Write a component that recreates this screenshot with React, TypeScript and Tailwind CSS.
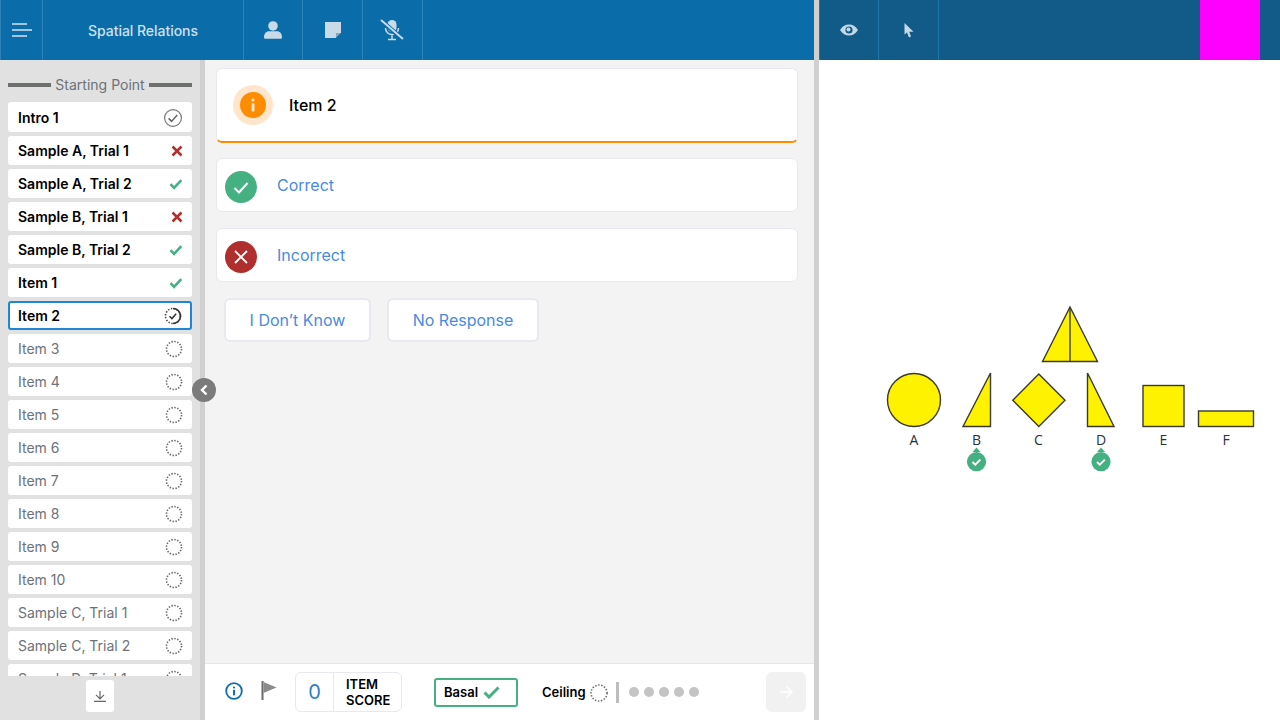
import React from "react";

const F = "[font-family:Inter,'Liberation_Sans',sans-serif]";

function Pending({ inProgress }: { inProgress?: boolean }) {
  return (
    <svg width="18" height="18" viewBox="0 0 18 18" fill="none">
      {inProgress ? (
        <>
          <circle cx="9" cy="9" r="7.5" stroke="#444" strokeWidth="1.6" strokeDasharray="1.4 1.6" />
          <path d="M9 1.5A7.5 7.5 0 0 1 9 16.5" stroke="#333" strokeWidth="1.6" />
          <path d="M5.5 9.3l2.4 2.3 4.2-4.800" stroke="#333" strokeWidth="1.5" />
        </>
      ) : (
        <circle cx="9" cy="9" r="7.5" stroke="#666" strokeWidth="1.6" strokeDasharray="1.4 1.55" />
      )}
    </svg>
  );
}

function Status({ s }: { s: string }) {
  if (s === "done")
    return (
      <svg width="20" height="20" viewBox="0 0 20 20" fill="none">
        <circle cx="10" cy="10" r="8.4" stroke="#777" strokeWidth="1.2" />
        <path d="M5.6 10.4l3 3 5.6-6.4" stroke="#666" strokeWidth="1.5" />
      </svg>
    );
  if (s === "x")
    return (
      <svg width="12" height="12" viewBox="0 0 12 12" fill="none" className="ml-[8px]">
        <path d="M1.500 1.500l9 9M10.500 1.500l-9 9" stroke="#b3302e" strokeWidth="2.600" />
      </svg>
    );
  if (s === "check")
    return (
      <svg width="14" height="12" viewBox="0 0 14 12" fill="none" className="ml-[6px]">
        <path d="M1.500 6.200l3.600 3.600 7.200-7.600" stroke="#45b082" strokeWidth="2.600" />
      </svg>
    );
  if (s === "current")
    return (
      <span className="ml-[4px] flex">
        <Pending inProgress />
      </span>
    );
  return (
    <span className="ml-[2px] flex">
      <Pending />
    </span>
  );
}

const items: [string, string][] = [
  ["Intro 1", "done"],
  ["Sample A, Trial 1", "x"],
  ["Sample A, Trial 2", "check"],
  ["Sample B, Trial 1", "x"],
  ["Sample B, Trial 2", "check"],
  ["Item 1", "check"],
  ["Item 2", "current"],
  ["Item 3", ""],
  ["Item 4", ""],
  ["Item 5", ""],
  ["Item 6", ""],
  ["Item 7", ""],
  ["Item 8", ""],
  ["Item 9", ""],
  ["Item 10", ""],
  ["Sample C, Trial 1", ""],
  ["Sample C, Trial 2", ""],
  ["Sample D, Trial 1", ""],
];

function Row({ label, s, first }: { label: string; s: string; first: boolean }) {
  const active = s !== "";
  const current = s === "current";
  return (
    <div
      className={`flex shrink-0 items-center justify-between rounded-[3px] bg-white text-[14px] ${
        first ? "h-[30px] pt-[1px]" : "h-[29px]"
      } ${current ? "border-2 border-[#1f86d6] pl-[8px]" : "pl-[10px]"} ${
        active ? "font-semibold text-black" : "text-[#6d7278]"
      }`}
    >
      <span>{label}</span>
      <span className="flex w-[38px] justify-center">
        <Status s={s} />
      </span>
    </div>
  );
}

function HeaderCell({ children, w }: { children: React.ReactNode; w: string }) {
  return <div className={`flex h-full shrink-0 items-center justify-center border-r border-[#2f82b8] ${w}`}>{children}</div>;
}

function Badge({ cx }: { cx: number }) {
  return (
    <g>
      <path d={`M${cx - 4} 452L${cx} 447.500L${cx + 4} 452Z`} fill="#45b082" />
      <circle cx={cx} cy="461.700" r="9.600" fill="#45b082" />
      <path d={`M${cx - 4} 462l2.800 2.700 5-5`} stroke="#fff" strokeWidth="1.900" fill="none" />
    </g>
  );
}

function Stimulus() {
  const st = { fill: "#fff200", stroke: "#3b3a2a", strokeWidth: 1.4 };
  const labels: [string, number][] = [
    ["A", 914],
    ["B", 976.5],
    ["C", 1038.5],
    ["D", 1101],
    ["E", 1163.5],
    ["F", 1226],
  ];
  return (
    <svg className="block h-[660px] w-[461px]" viewBox="819 60 461 660">
      <path d="M1070 307L1042.500 361.500H1097.500Z" {...st} />
      <path d="M1070 307V361.500" {...st} />
      <circle cx="914" cy="400" r="26.500" {...st} />
      <path d="M963 426.500L990.500 373V426.500Z" {...st} />
      <path d="M1038.800 374L1065 400.300L1038.800 426.500L1012.800 400.300Z" {...st} />
      <path d="M1087.500 373V426.500H1114Z" {...st} />
      <rect x="1143" y="385.500" width="41" height="41" {...st} />
      <rect x="1198.500" y="411" width="55" height="15.500" {...st} />
      {labels.map(([l, x]) => (
        <text key={l} x={x} y="445" textAnchor="middle" fontSize="14" fill="#2b3040" fontFamily="'Open Sans',sans-serif">
          {l}
        </text>
      ))}
      <Badge cx={976.5} />
      <Badge cx={1101} />
    </svg>
  );
}

export default function App() {
  return (
    <div className={`flex h-[720px] w-[1280px] overflow-hidden bg-white ${F}`}>
      <div className="flex w-[814px] shrink-0 flex-col">
        <header className="flex h-[60px] shrink-0 items-center border-l border-[#2f82b8] bg-[#0a6ca8]">
          <HeaderCell w="w-[42px]">
            <svg width="22" height="16" viewBox="0 0 22 16" fill="none" stroke="#d3e2ee" strokeWidth="1.600">
              <path d="M1 2H16M1 8H21M1 14H16" />
            </svg>
          </HeaderCell>
          <HeaderCell w="w-[201px]">
            <span className="text-[14px] font-medium tracking-[-0.03px] text-[#cfe0ec]">Spatial Relations</span>
          </HeaderCell>
          <HeaderCell w="w-[59px]">
            <svg width="18" height="18" viewBox="0 0 20 20" fill="#c9dbe8">
              <circle cx="10" cy="5.500" r="5.300" />
              <path d="M0 18c0-4 2.500-6.500 5.500-6.500h9c3 0 5.500 2.500 5.500 6.500 0 1-.8 1.800-1.800 1.800H1.800C.8 19.800 0 19 0 18z" />
            </svg>
          </HeaderCell>
          <HeaderCell w="w-[60px]">
            <svg width="16" height="16" viewBox="0 0 16 16">
              <path d="M0 0H16V10.500L10.500 16H0Z" fill="#c9dbe8" />
              <path d="M11 11H15.500L11 15.500Z" fill="#7fa9c6" />
            </svg>
          </HeaderCell>
          <HeaderCell w="w-[60px]">
            <svg width="24" height="22" viewBox="0 0 24 22" fill="none" className="mr-[2px]">
              <rect x="7.500" y="1" width="9" height="12" rx="4.500" fill="#c9dbe8" />
              <path d="M5.500 9c0 4 3 6.500 6.500 6.500S18.500 13 18.500 9M12 15.500V20M8 20.500H16" stroke="#c9dbe8" strokeWidth="1.500" />
              <path d="M1 1.500L23 20.500" stroke="#0a6ca8" strokeWidth="4.500" />
              <path d="M1 1L23 20" stroke="#c9dbe8" strokeWidth="2" />
            </svg>
          </HeaderCell>
        </header>

        <div className="flex min-h-0 flex-1">
          <aside className="relative flex w-[205px] shrink-0 flex-col border-r-[5px] border-[#d0d0d0] bg-[#e1e1e1]">
            <div className="flex h-[42px] shrink-0 items-end gap-[4px] px-2 pb-[9px]">
              <span className="mb-[6px] h-[4px] flex-1 bg-[#6e706e]" />
              <span className="text-[14px] leading-[17px] tracking-[0.01px] text-[#6d7278]">Starting Point</span>
              <span className="mb-[6px] h-[4px] flex-1 bg-[#6e706e]" />
            </div>
            <div className="flex h-[574px] shrink-0 flex-col gap-[4px] overflow-hidden px-2">
              {items.map(([l, s], i) => (
                <Row key={l} label={l} s={s} first={i === 0} />
              ))}
            </div>
            <div className="flex justify-center pt-[4px]">
              <div className="flex h-[32px] w-[28px] items-center justify-center rounded-[3px] bg-white">
                <svg width="12" height="11" viewBox="0 0 12 11" fill="none" stroke="#666" strokeWidth="1.200">
                  <path d="M6 0V7.500M2 3.800L6 7.800L10 3.800M0 10.300H12" />
                </svg>
              </div>
            </div>
            <button className="absolute left-[192px] top-[318px] flex h-[24px] w-[24px] items-center justify-center rounded-full bg-[#7b7b7b]">
              <svg width="10" height="12" viewBox="0 0 10 12" fill="none" stroke="#fff" strokeWidth="2.400">
                <path d="M7.500 1.500L3 6L7.500 10.500" />
              </svg>
            </button>
          </aside>

          <main className="flex min-w-0 flex-1 flex-col bg-[#f3f3f3]">
            <div className="flex flex-1 flex-col pl-[11px] pr-[16px] pt-[8px]">
              <div className="flex h-[75px] items-center rounded-[6px] border border-b-2 border-[#e6e9f0] border-b-[#ff8c00] bg-white pl-[16px]">
                <div className="flex h-[40px] w-[40px] items-center justify-center rounded-full bg-[#ffe5cb]">
                  <div className="flex h-[26px] w-[26px] items-center justify-center rounded-full bg-[#ff8c00]">
                    <svg width="6" height="14" viewBox="0 0 6 14" fill="#ffe5cb">
                      <circle cx="3" cy="2" r="1.600" />
                      <rect x="1.500" y="5" width="3" height="8.500" rx="1" />
                    </svg>
                  </div>
                </div>
                <span className="ml-[16px] text-[16px] font-medium text-black">Item 2</span>
              </div>
              <div className="mt-[15px] flex h-[54px] items-center rounded-[6px] border border-[#e6e9f0] bg-white pl-[8px]">
                <div className="mt-[4px] flex h-[32px] w-[32px] items-center justify-center rounded-full bg-[#45b082]">
                  <svg width="16" height="13" viewBox="0 0 16 13" fill="none" stroke="#fff" strokeWidth="2">
                    <path d="M1.500 7l4.500 4.500 8.500-9.500" />
                  </svg>
                </div>
                <span className="ml-[20px] text-[16px] text-[#4a8ade]">Correct</span>
              </div>
              <div className="mt-[16px] flex h-[54px] items-center rounded-[6px] border border-[#e6e9f0] bg-white pl-[8px]">
                <div className="mt-[4px] flex h-[32px] w-[32px] items-center justify-center rounded-full bg-[#b02e2e]">
                  <svg width="14" height="14" viewBox="0 0 14 14" fill="none" stroke="#fff" strokeWidth="1.800">
                    <path d="M1 1L13 13M13 1L1 13" />
                  </svg>
                </div>
                <span className="ml-[20px] text-[16px] text-[#4a8ade]">Incorrect</span>
              </div>
              <div className="mt-[16px] flex gap-[16px] pl-[8px]">
                <div className="flex h-[44px] w-[147px] items-center justify-center rounded-[6px] border-2 border-[#e6e9f0] bg-white text-[16px] text-[#4a8ade]">
                  I Don’t Know
                </div>
                <div className="flex h-[44px] w-[152px] items-center justify-center rounded-[6px] border-2 border-[#e6e9f0] bg-white text-[16px] text-[#4a8ade]">
                  No Response
                </div>
              </div>
            </div>

            <footer className="flex h-[57px] shrink-0 items-center border-t border-[#e6e6e6] bg-white pl-[20px] text-black">
              <svg width="18" height="18" viewBox="0 0 18 18" fill="none" className="mb-[2px]">
                <circle cx="9" cy="9" r="7.800" stroke="#0d6ea8" strokeWidth="1.800" />
                <circle cx="9" cy="5.500" r="1.100" fill="#0d6ea8" />
                <rect x="8" y="7.800" width="2" height="5.500" fill="#0d6ea8" />
              </svg>
              <svg width="16" height="20" viewBox="0 0 16 20" className="mb-[2px] ml-[18px]">
                <rect x="0.500" y="0" width="2" height="19" fill="#6b6b6b" />
                <path d="M2.500 1L15.500 6.500L2.500 12Z" fill="#8a8a8a" />
              </svg>
              <div className="ml-[18px] flex h-[40px] w-[107px] items-center rounded-[6px] border border-[#e6e9f0]">
                <div className="flex h-full w-[38px] items-center justify-center border-r border-[#e6e9f0] text-[20px] text-[#2b7fc9]">
                  0
                </div>
                <div className="pl-[12px] text-[13px] font-semibold leading-[16px]">
                  ITEM
                  <br />
                  SCORE
                </div>
              </div>
              <div className="ml-[32px] flex h-[29px] w-[84px] items-center gap-[5px] rounded-[3px] border-2 border-[#45b082] pl-[8px] text-[13px] font-semibold">
                <span className="mt-[1px]">Basal</span>
                <svg width="17" height="13" viewBox="0 0 17 13" fill="none" stroke="#45b082" strokeWidth="3">
                  <path d="M1.500 6.500l4.500 4.500 9.500-9.500" />
                </svg>
              </div>
              <span className="ml-[24px] mt-[1px] text-[13px] font-semibold">Ceiling</span>
              <svg width="18" height="18" viewBox="0 0 18 18" fill="none" className="ml-[4px] mt-[2px]">
                <circle cx="9" cy="9" r="8" stroke="#666" strokeWidth="1.600" strokeDasharray="1.400 1.650" />
              </svg>
              <span className="ml-[8px] h-[21px] w-[3px] bg-[#bdbdbd]" />
              <div className="ml-[10px] flex gap-[5px]">
                {[0, 1, 2, 3, 4].map((i) => (
                  <span key={i} className="h-[10px] w-[10px] rounded-full bg-[#c4c4c4]" />
                ))}
              </div>
              <div className="ml-[67px] flex h-[40px] w-[40px] items-center justify-center rounded-[6px] bg-[#f1f1f1]">
                <svg width="14" height="14" viewBox="0 0 14 14" fill="none" stroke="#fff" strokeWidth="1.500">
                  <path d="M1 7H13M7.500 1.500L13 7L7.500 12.500" />
                </svg>
              </div>
            </footer>
          </main>
        </div>
      </div>

      <div className="w-[5px] shrink-0 bg-[#d0d0d0]" />

      <div className="flex min-w-0 flex-1 flex-col">
        <header className="flex h-[60px] shrink-0 items-center border-l border-[#1d76ad] bg-[#125a87]">
          <div className="flex h-full w-[59px] items-center justify-center border-r border-[#1d76ad]">
            <svg width="18" height="12" viewBox="0 0 18 12">
              <path d="M0 6C2.500 2 5.500 0.500 9 0.500S15.500 2 18 6C15.500 10 12.500 11.500 9 11.500S2.500 10 0 6Z" fill="#c5d8e6" />
              <circle cx="9" cy="6" r="3.600" fill="#125a87" />
              <circle cx="8.500" cy="5.500" r="2" fill="#c5d8e6" />
            </svg>
          </div>
          <div className="flex h-full w-[60px] items-center justify-center border-r border-[#1d76ad]">
            <svg width="10" height="15" viewBox="0 0 10 15">
              <path d="M0.500 0V11.500L3 9.500L5 14.500L7 13.500L5.200 8.800H9.500Z" fill="#c5d8e6" />
            </svg>
          </div>
          <div className="flex-1" />
          <div className="h-full w-[60px] bg-[#ff00ff]" />
          <div className="w-[20px]" />
        </header>
        <Stimulus />
      </div>
    </div>
  );
}
